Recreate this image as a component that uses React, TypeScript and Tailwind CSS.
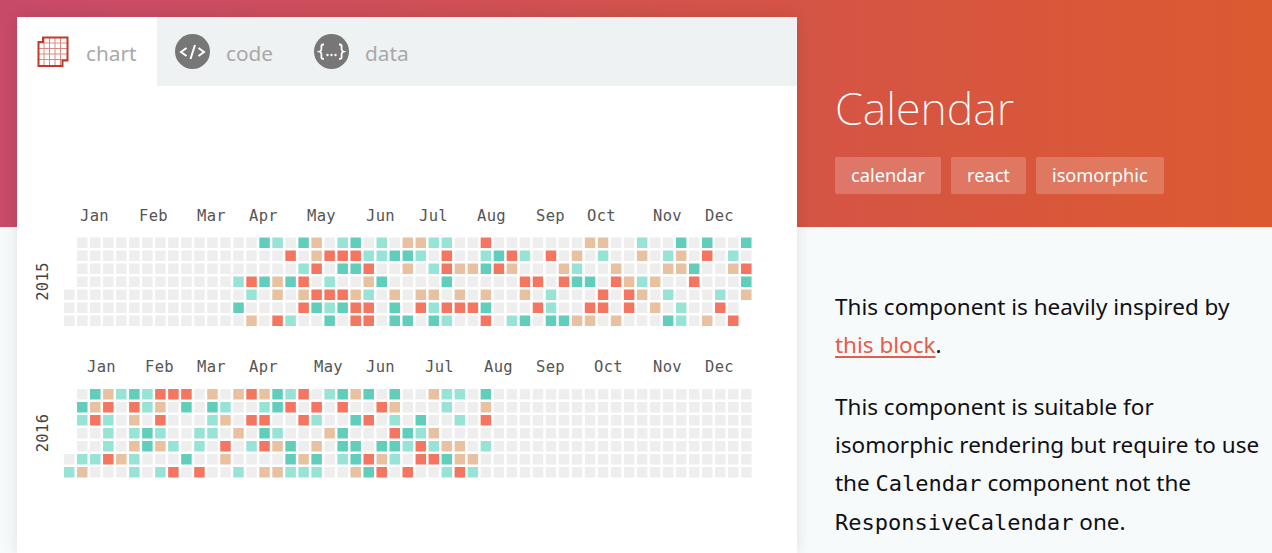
const C: Record<string, string> = { e: "#eeeeee", t: "#61cdbb", l: "#97e3d5", o: "#e8c1a0", r: "#f47560" };

const Y2015 = [
  ".eeeeeeeee eeeeetleto elteleooll eereeeeeee ooeeleetet eet",
  ".eeeeeeeee eeeeeeereo rrrllttler eeltrlereo eleeoeloer ele",
  ".eeeeeeeee eeeeeeeelr ettreeoelr ootroeeeol eeoeeeoote eor",
  ".eeeeeeeee eeelrtotre leeoteeeet eeeeerrert teroloeere eet",
  "eeeeeeeeee eeeeleoeor rroleoeooe oeoeeoelee ereroeleee leo",
  "eeeeeeeeee eeeteeeert ltrreterlr rrteeerlee rrereoelee re.",
  "eeeeeeeeee eeeeoerlee terrettetl eereltetto oeoeeetleo er.",
];
const Y2016 = [
  ".etoltlrrr eoeorotlre ltoteteeol leteeeeeee eeeeeeeeee eee",
  ".torerloet etleeltrer ereeroeeel eeoeeeeeee eeeeeeeeee eee",
  ".lrleoeree eloerreerl eetreletee lereeeeeee eeeeeeeeee eee",
  ".eeleltlee lleoetleee oteeertloe eeeeeeeeee eeeeeeeeee eee",
  ".eeleotole lerelroteo ettettlrlo oeleeeeeee eeeeeeeeee eee",
  "ellroleeet eeoeeeetot eltrolerrt ooeeeeeeee eeeeeeeeee eee",
  "loeeelelre reeleoolll eeotrereel rleeeeeeee eeeeeeeeee eee",
];

const M2015: [string, number][] = [["Jan", 80], ["Feb", 139], ["Mar", 197], ["Apr", 249], ["May", 307], ["Jun", 366], ["Jul", 419], ["Aug", 477], ["Sep", 536], ["Oct", 587], ["Nov", 653], ["Dec", 705]];
const M2016: [string, number][] = [["Jan", 87], ["Feb", 145], ["Mar", 197], ["Apr", 249], ["May", 314], ["Jun", 366], ["Jul", 425], ["Aug", 484], ["Sep", 536], ["Oct", 594], ["Nov", 653], ["Dec", 705]];

function Year({ rows, months, top, label, base }: { rows: string[]; months: [string, number][]; top: number; label: string; base: number }) {
  const cy = top + 44;
  return (
    <g>
      {months.map(([m, x]) => (
        <text key={m} x={x} y={base} className="fill-[#555555] text-[15.5px] tracking-[0.3px] [font-family:'DejaVu_Sans_Mono',monospace]">{m}</text>
      ))}
      <text x={0} y={0} textAnchor="middle" transform={`translate(48 ${cy}) rotate(-90)`} className="fill-[#444444] text-[15.5px] tracking-[0.3px] [font-family:'DejaVu_Sans_Mono',monospace]">{label}</text>
      {rows.map((r, ry) =>
        r.replace(/ /g, "").split("").map((ch, cx) =>
          ch === "." ? null : (
            <rect key={`${ry}-${cx}`} x={64 + cx * 13.02} y={top + ry * 13} width={10.5} height={10.5} fill={C[ch]} />
          )
        )
      )}
    </g>
  );
}

function ChartIcon() {
  return (
    <svg width="32" height="32" viewBox="36 37 32 32" className="shrink-0">
      <g stroke="#d98a80" strokeWidth="1" fill="none">
        {[43, 48.5, 54, 59.5].map((x) => <path key={x} d={`M${x} 38.5V67`} />)}
        {[44, 49.5, 55, 60.5].map((y) => <path key={y} d={`M38 ${y}H66`} />)}
      </g>
      <path d="M42 38.5H66.5V61.5H61.5V67H37.5V43H42Z" fill="none" stroke="#c0392b" strokeWidth="2" />
    </svg>
  );
}

function CodeIcon() {
  return (
    <svg width="35" height="35" viewBox="0 0 35 35" className="shrink-0">
      <circle cx="17.5" cy="17.5" r="17.5" fill="#777777" />
      <g fill="none" stroke="#ffffff" strokeWidth="2">
        <path d="M11.5 14 6 18l5.5 4" />
        <path d="M20 11l-4.5 14" />
        <path d="M23.5 14l5.5 4-5.5 4" />
      </g>
    </svg>
  );
}

function DataIcon() {
  return (
    <svg width="35" height="35" viewBox="0 0 35 35" className="shrink-0">
      <circle cx="17.5" cy="17.5" r="17.5" fill="#777777" />
      <g fill="none" stroke="#ffffff" strokeWidth="1.8">
        <path d="M10 10.5H9c-1.2 0-1.6.7-1.6 1.8v3c0 1.2-.6 2-1.9 2.4 1.3.4 1.9 1.2 1.9 2.4v3c0 1.1.4 1.8 1.6 1.8h1" />
        <path d="M25 10.5h1c1.2 0 1.6.7 1.6 1.8v3c0 1.2.6 2 1.9 2.4-1.3.4-1.9 1.2-1.9 2.4v3c0 1.1-.4 1.8-1.6 1.8h-1" />
      </g>
      <g fill="#ffffff">
        <circle cx="13.5" cy="21" r="1.2" />
        <circle cx="17.5" cy="21" r="1.2" />
        <circle cx="21.5" cy="21" r="1.2" />
      </g>
    </svg>
  );
}

const tag = "h-[37px] flex items-center px-4 rounded-[2px] bg-white/20 text-white text-[18.2px]";
const mono = "text-[22px] [font-family:'DejaVu_Sans_Mono',monospace]";

export default function App() {
  return (
    <div className="h-[553px] w-[1272px] overflow-hidden flex bg-[#f7fafb] bg-[linear-gradient(90deg,#c84a6a,#dc5a30)] bg-no-repeat bg-[length:100%_227px] [font-family:'Noto_Sans',sans-serif]">
      <div className="ml-[17px] mt-[17px] w-[780px] h-[536px] bg-white flex flex-col shadow-[0_0_14px_rgba(0,0,0,0.1)]">
        <div className="h-[69px] flex bg-[#eef2f3] text-[20.8px] text-[#a9a9a9]">
          <div className="w-[140px] bg-white flex items-center pl-[20px] gap-[17px]">
            <ChartIcon />
            <span className="pt-[5px]">chart</span>
          </div>
          <div className="w-[138px] flex items-center pl-[18px] gap-[16px]">
            <CodeIcon />
            <span className="pt-[5px]">code</span>
          </div>
          <div className="flex items-center pl-[19px] gap-[16px]">
            <DataIcon />
            <span className="pt-[5px]">data</span>
          </div>
        </div>
        <svg width="780" height="467" viewBox="17 86 780 467" className="block">
          <Year rows={Y2015} months={M2015} top={237.5} label="2015" base={221} />
          <Year rows={Y2016} months={M2016} top={389} label="2016" base={372} />
        </svg>
      </div>
      <div className="flex-1 pl-[38px] pr-2 flex flex-col">
        <h1 className="mt-[78px] text-[45px] leading-[60px] font-extralight text-white">Calendar</h1>
        <div className="mt-[19px] flex gap-[10px]">
          <span className={tag}>calendar</span>
          <span className={tag}>react</span>
          <span className={tag}>isomorphic</span>
        </div>
        <div className="mt-[94px] text-[22.5px] leading-[38px] text-[#0f0f14]">
          <p>This component is heavily inspired by <a className="text-[#e25d4b] underline decoration-2 underline-offset-[3px]">this block</a>.</p>
          <p className="mt-[24px]">This component is suitable for isomorphic rendering but require to use the <code className={mono}>Calendar</code> component not the <code className={mono}>ResponsiveCalendar</code> one.</p>
        </div>
      </div>
    </div>
  );
}
